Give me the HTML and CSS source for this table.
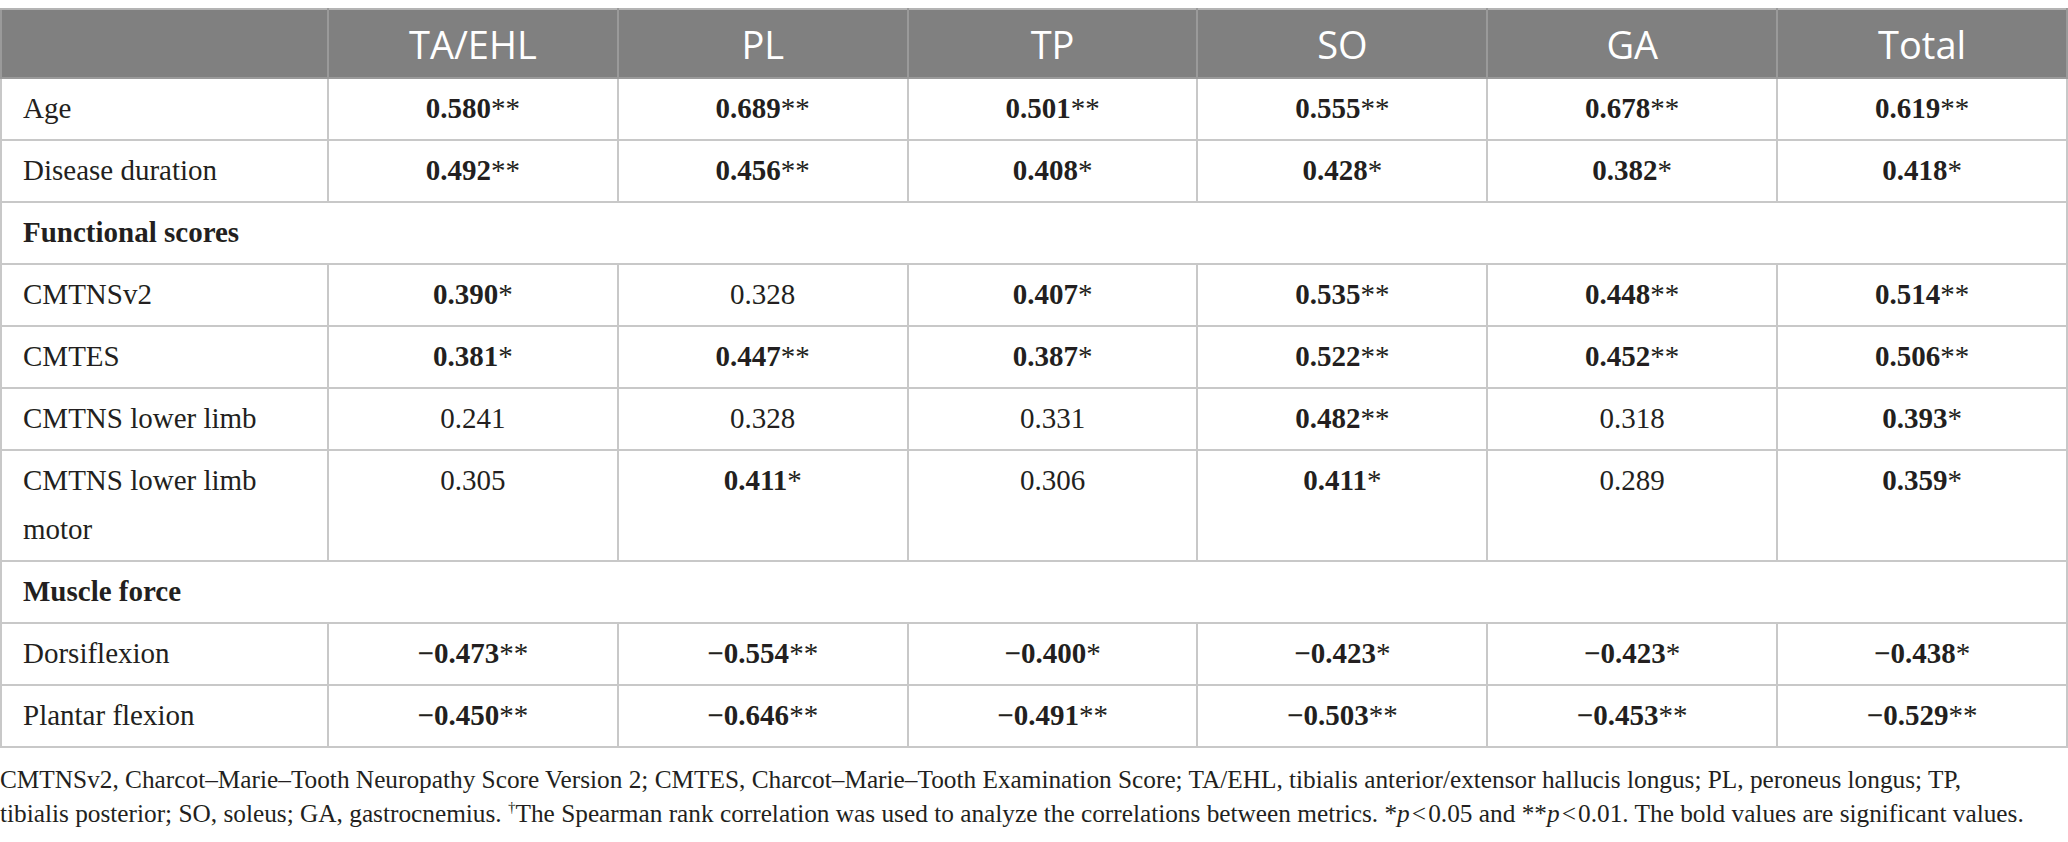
FILE: index.html
```html
<!DOCTYPE html>
<html lang="en">
<head>
  <meta charset="UTF-8">
  <title>Correlations</title>
  <link rel="stylesheet" href="styles.css">
</head>
<body>
<div class="box">
  <table class="data">
    <thead>
      <tr>
        <th class="first"></th>
        <th>TA/EHL</th>
        <th>PL</th>
        <th>TP</th>
        <th>SO</th>
        <th>GA</th>
        <th>Total</th>
      </tr>
    </thead>
    <tbody>
      <tr>
        <td>Age</td>
        <td><b>0.580</b>**</td>
        <td><b>0.689</b>**</td>
        <td><b>0.501</b>**</td>
        <td><b>0.555</b>**</td>
        <td><b>0.678</b>**</td>
        <td><b>0.619</b>**</td>
      </tr>
      <tr>
        <td>Disease duration</td>
        <td><b>0.492</b>**</td>
        <td><b>0.456</b>**</td>
        <td><b>0.408</b>*</td>
        <td><b>0.428</b>*</td>
        <td><b>0.382</b>*</td>
        <td><b>0.418</b>*</td>
      </tr>
      <tr class="group">
        <td colspan="7">Functional scores</td>
      </tr>
      <tr>
        <td>CMTNSv2</td>
        <td><b>0.390</b>*</td>
        <td>0.328</td>
        <td><b>0.407</b>*</td>
        <td><b>0.535</b>**</td>
        <td><b>0.448</b>**</td>
        <td><b>0.514</b>**</td>
      </tr>
      <tr>
        <td>CMTES</td>
        <td><b>0.381</b>*</td>
        <td><b>0.447</b>**</td>
        <td><b>0.387</b>*</td>
        <td><b>0.522</b>**</td>
        <td><b>0.452</b>**</td>
        <td><b>0.506</b>**</td>
      </tr>
      <tr>
        <td>CMTNS lower limb</td>
        <td>0.241</td>
        <td>0.328</td>
        <td>0.331</td>
        <td><b>0.482</b>**</td>
        <td>0.318</td>
        <td><b>0.393</b>*</td>
      </tr>
      <tr>
        <td>CMTNS lower limb<br>motor</td>
        <td>0.305</td>
        <td><b>0.411</b>*</td>
        <td>0.306</td>
        <td><b>0.411</b>*</td>
        <td>0.289</td>
        <td><b>0.359</b>*</td>
      </tr>
      <tr class="group">
        <td colspan="7">Muscle force</td>
      </tr>
      <tr>
        <td>Dorsiflexion</td>
        <td><b>&minus;0.473</b>**</td>
        <td><b>&minus;0.554</b>**</td>
        <td><b>&minus;0.400</b>*</td>
        <td><b>&minus;0.423</b>*</td>
        <td><b>&minus;0.423</b>*</td>
        <td><b>&minus;0.438</b>*</td>
      </tr>
      <tr>
        <td>Plantar flexion</td>
        <td><b>&minus;0.450</b>**</td>
        <td><b>&minus;0.646</b>**</td>
        <td><b>&minus;0.491</b>**</td>
        <td><b>&minus;0.503</b>**</td>
        <td><b>&minus;0.453</b>**</td>
        <td><b>&minus;0.529</b>**</td>
      </tr>
    </tbody>
  </table>
  <p class="note">CMTNSv2, Charcot&ndash;Marie&ndash;Tooth Neuropathy Score Version 2; CMTES, Charcot&ndash;Marie&ndash;Tooth Examination Score; TA/EHL, tibialis anterior/extensor hallucis longus; PL, peroneus longus; TP,<br>tibialis posterior; SO, soleus; GA, gastrocnemius. <sup>&dagger;</sup>The Spearman rank correlation was used to analyze the correlations between metrics. *<i>p</i>&#8202;&lt;&#8202;0.05 and **<i>p</i>&#8202;&lt;&#8202;0.01. The bold values are significant values.</p>
</div>
</body>
</html>
```
FILE: styles.css
```css
*{
  margin: 0;
  padding: 0;
}
html,body{
  width: 100%;
  background-color: white;
}
.box{
  width: 100%;
  padding-top: 8px;
  font-family: "Liberation Serif", "Times New Roman", serif;
  color: #231f20;
}
/*表格*/
.data{
  width: 100%;
  border-collapse: collapse;
  table-layout: fixed;
  font-size: 29px;
}
.data th{
  background-color: #808080;
  color: #fff;
  font-family: "Open Sans", "Noto Sans", sans-serif;
  font-weight: normal;
  font-size: 38px;
  height: 67px;
  border: 2px solid #9a9a9a;
  border-top-color: #b4b4b4;
}
.data th.first{
  width: 325px;
}
.data td{
  border: 2px solid #c8c8c8;
  line-height: 49px;
  padding: 5px 0 6px;
  text-align: center;
  vertical-align: top;
}
.data td:first-child{
  text-align: left;
  padding-left: 21px;
}
.data .group td{
  font-weight: bold;
}
/*注释*/
.note{
  font-size: 25.3px;
  line-height: 34px;
  margin-top: 14px;
  white-space: nowrap;
}
.note sup{
  font-size: 15px;
  vertical-align: 10px;
  line-height: 0;
}
```
